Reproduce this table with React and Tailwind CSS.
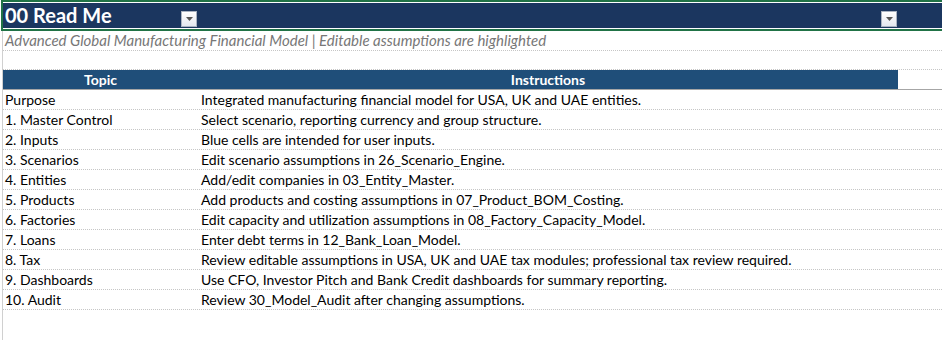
import React from 'react';

const rows = [
    ['Purpose', 'Integrated manufacturing financial model for USA, UK and UAE entities.'],
    ['1. Master Control', 'Select scenario, reporting currency and group structure.'],
    ['2. Inputs', 'Blue cells are intended for user inputs.'],
    ['3. Scenarios', 'Edit scenario assumptions in 26_Scenario_Engine.'],
    ['4. Entities', 'Add/edit companies in 03_Entity_Master.'],
    ['5. Products', 'Add products and costing assumptions in 07_Product_BOM_Costing.'],
    ['6. Factories', 'Edit capacity and utilization assumptions in 08_Factory_Capacity_Model.'],
    ['7. Loans', 'Enter debt terms in 12_Bank_Loan_Model.'],
    ['8. Tax', 'Review editable assumptions in USA, UK and UAE tax modules; professional tax review required.'],
    ['9. Dashboards', 'Use CFO, Investor Pitch and Bank Credit dashboards for summary reporting.'],
    ['10. Audit', 'Review 30_Model_Audit after changing assumptions.'],
];

function FilterButton() {
    return (
        <div className="w-[16px] h-[16px] border border-[#a9b3c2] bg-gradient-to-b from-white to-[#e3e7ee] flex items-center justify-center">
            <svg width="7" height="4" viewBox="0 0 7 4">
                <path d="M0 0h7L3.5 4z" fill="#555" />
            </svg>
        </div>
    );
}

export default function App() {
    return (
        <div className="w-[942px] h-[340px] bg-white overflow-hidden text-black" style={{ fontFamily: 'Lato, "Open Sans", sans-serif' }}>
            {/* title cell, selected */}
            <div className="ml-[1px] h-[31px] border-y-2 border-l-2 border-[#217346] bg-white py-[1px]">
                <div className="h-full bg-[#1b365f] flex">
                    <div className="w-[194px] flex items-end justify-between pb-[1px]">
                        <span className="self-center pl-[2px] text-[20px] font-bold text-white leading-none">00 Read Me</span>
                        <FilterButton />
                    </div>
                    <div className="w-[700px] flex items-end justify-end pb-[1px]">
                        <FilterButton />
                    </div>
                </div>
            </div>

            <div className="flex h-[309px]">
                <div className="w-[2px]"></div>
                <div className="w-px bg-[#d0d0d0]"></div>
                <div className="flex-1 flex flex-col">
                    <div className="h-[20px] border-b border-dotted border-[#c6c6c6] flex items-center pl-[2px] text-[15px] italic text-[#777777]">
                        Advanced Global Manufacturing Financial Model | Editable assumptions are highlighted
                    </div>
                    <div className="h-[19px] border-b border-dotted border-[#c6c6c6]"></div>
                    <div className="h-[20px] flex border-b border-[#a6a6a6]">
                        <div className="w-[195px] bg-[#1f4e79] text-white font-bold text-[14px] flex items-center justify-center">Topic</div>
                        <div className="w-[700px] bg-[#1f4e79] text-white font-bold text-[14px] flex items-center justify-center">Instructions</div>
                    </div>
                    {rows.map(([topic, text]) => (
                        <div key={topic} className="h-[20px] flex border-b border-dotted border-[#c6c6c6] text-[14px]">
                            <div className="w-[195px] pl-[2px] flex items-center">{topic}</div>
                            <div className="pl-[3px] flex items-center whitespace-nowrap">{text}</div>
                        </div>
                    ))}
                </div>
            </div>
        </div>
    );
}
